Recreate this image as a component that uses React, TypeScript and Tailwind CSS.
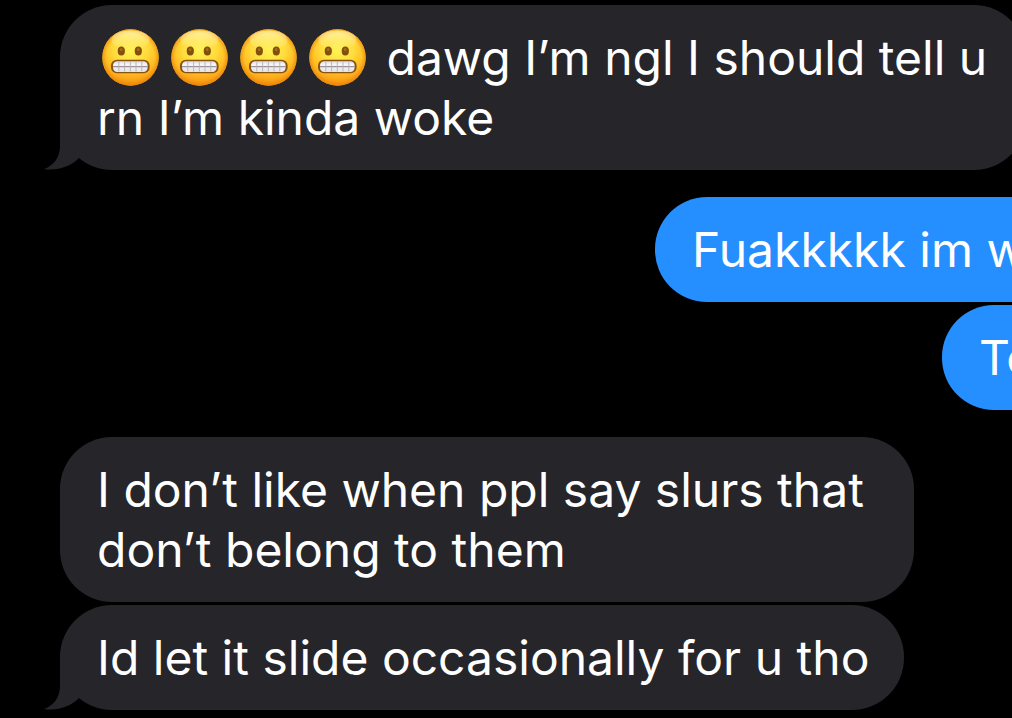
import React from 'react';
import { clsx } from 'clsx';

interface Message {
  id: number;
  from: 'me' | 'them';
  text: string;
  emojis?: number;
  hasTail?: boolean;
  className: string;
}

const messages: Message[] = [
  { id: 1, from: 'them', text: "dawg I’m ngl I should tell u rn I’m kinda woke", emojis: 4, hasTail: true, className: 'ml-[60px] -mr-[14px]' },
  { id: 2, from: 'me', text: 'Fuakkkkk im w', className: 'mt-[27px] w-[357px]' },
  { id: 3, from: 'me', text: 'To', className: 'mt-[3px] w-[70px]' },
  { id: 4, from: 'them', text: 'I don’t like when ppl say slurs that don’t belong to them', className: 'mt-[27px] ml-[60px] max-w-[854px]' },
  { id: 5, from: 'them', text: 'Id let it slide occasionally for u tho', hasTail: true, className: 'mt-[3px] ml-[60px]' },
];

function GrimaceEmoji() {
  return (
    <svg role="img" aria-label="😬" viewBox="0 0 57 57" className="mr-[7px] ml-[5px] inline-block size-[57px] align-[-11px]">
      <defs>
        <linearGradient id="face" x1="0" y1="0" x2="0" y2="1">
          <stop offset="0" stopColor="#ffdc4a" />
          <stop offset="0.5" stopColor="#ffcb2b" />
          <stop offset="0.8" stopColor="#ffb221" />
          <stop offset="1" stopColor="#f89a17" />
        </linearGradient>
        <radialGradient id="glow" cx="0.5" cy="0.38" r="0.6">
          <stop offset="0" stopColor="#fff75a" stopOpacity="0.9" />
          <stop offset="0.5" stopColor="#ffe544" stopOpacity="0.6" />
          <stop offset="0.75" stopColor="#ffb81f" stopOpacity="0.3" />
          <stop offset="1" stopColor="#ee8208" stopOpacity="0.6" />
        </radialGradient>
        <linearGradient id="shine" x1="0" y1="0" x2="0" y2="1">
          <stop offset="0" stopColor="#fffbd0" stopOpacity="0.6" />
          <stop offset="1" stopColor="#fffbd0" stopOpacity="0" />
        </linearGradient>
        <radialGradient id="rim" cx="0.5" cy="0.5" r="0.5">
          <stop offset="0.84" stopColor="#f08c0a" stopOpacity="0" />
          <stop offset="1" stopColor="#e98405" stopOpacity="0.65" />
        </radialGradient>
        <linearGradient id="teeth" x1="0" y1="0" x2="0" y2="1">
          <stop offset="0" stopColor="#dedce2" />
          <stop offset="0.3" stopColor="#f6f5f8" />
          <stop offset="1" stopColor="#e6e3e9" />
        </linearGradient>
      </defs>
      <circle cx="28.5" cy="28.5" r="28.2" fill="url(#face)" />
      <circle cx="28.5" cy="28.5" r="28.2" fill="url(#glow)" />
      <circle cx="28.5" cy="28.5" r="28.2" fill="url(#rim)" />
      <ellipse cx="28.5" cy="11" rx="19" ry="9.5" fill="url(#shine)" />
      <ellipse cx="19.3" cy="22" rx="3.6" ry="4.5" fill="#80500c" />
      <ellipse cx="36.3" cy="22" rx="3.6" ry="4.5" fill="#80500c" />
      <ellipse cx="19.2" cy="20.6" rx="1.4" ry="1.5" fill="#a66e1c" />
      <ellipse cx="36.2" cy="20.6" rx="1.4" ry="1.5" fill="#a66e1c" />
      <rect x="9" y="30.7" width="38.6" height="13.6" rx="5.8" fill="#85540f" />
      <rect x="11" y="32.3" width="34.6" height="10.6" rx="4.2" fill="url(#teeth)" />
      <path d="M11 37.6h34.6" stroke="#9c9498" strokeWidth="1.1" />
      <path d="M16.8 32.6v10M22.6 32.6v10M28.3 32.6v10M34 32.6v10M39.8 32.6v10" stroke="#b5b0b4" strokeWidth="0.9" />
    </svg>
  );
}

function Tail() {
  return (
    <svg aria-hidden="true" viewBox="0 0 40 52" className="absolute bottom-0 -left-4 h-[52px] w-10">
      <path d="M16 0V28C16 40 9 48 0 51C13 53 26 49 35 40L40 20Z" fill="#26252a" />
    </svg>
  );
}

function Bubble({ message }: { message: Message }) {
  const isMe = message.from === 'me';

  return (
    <li
      className={clsx(
        'relative pt-[23px] pb-[22px] pl-[37px]',
        isMe
          ? 'self-end overflow-hidden rounded-l-[52px] bg-[#268fff] whitespace-nowrap'
          : 'self-start rounded-[52px] bg-[#26252a] pr-[35px]',
        message.className
      )}
    >
      <p>
        {message.emojis && (
          <>
            {Array.from({ length: message.emojis }).map((_, i) => (
              <GrimaceEmoji key={i} />
            ))}{' '}
          </>
        )}
        {message.text}
      </p>
      {message.hasTail && <Tail />}
    </li>
  );
}

export default function App() {
  return (
    <main className="min-h-screen overflow-hidden bg-black pt-[5px] pb-2 font-['Inter',sans-serif] text-[48px] leading-[60px] text-white">
      <ul className="flex flex-col">
        {messages.map((message) => (
          <Bubble key={message.id} message={message} />
        ))}
      </ul>
    </main>
  );
}
